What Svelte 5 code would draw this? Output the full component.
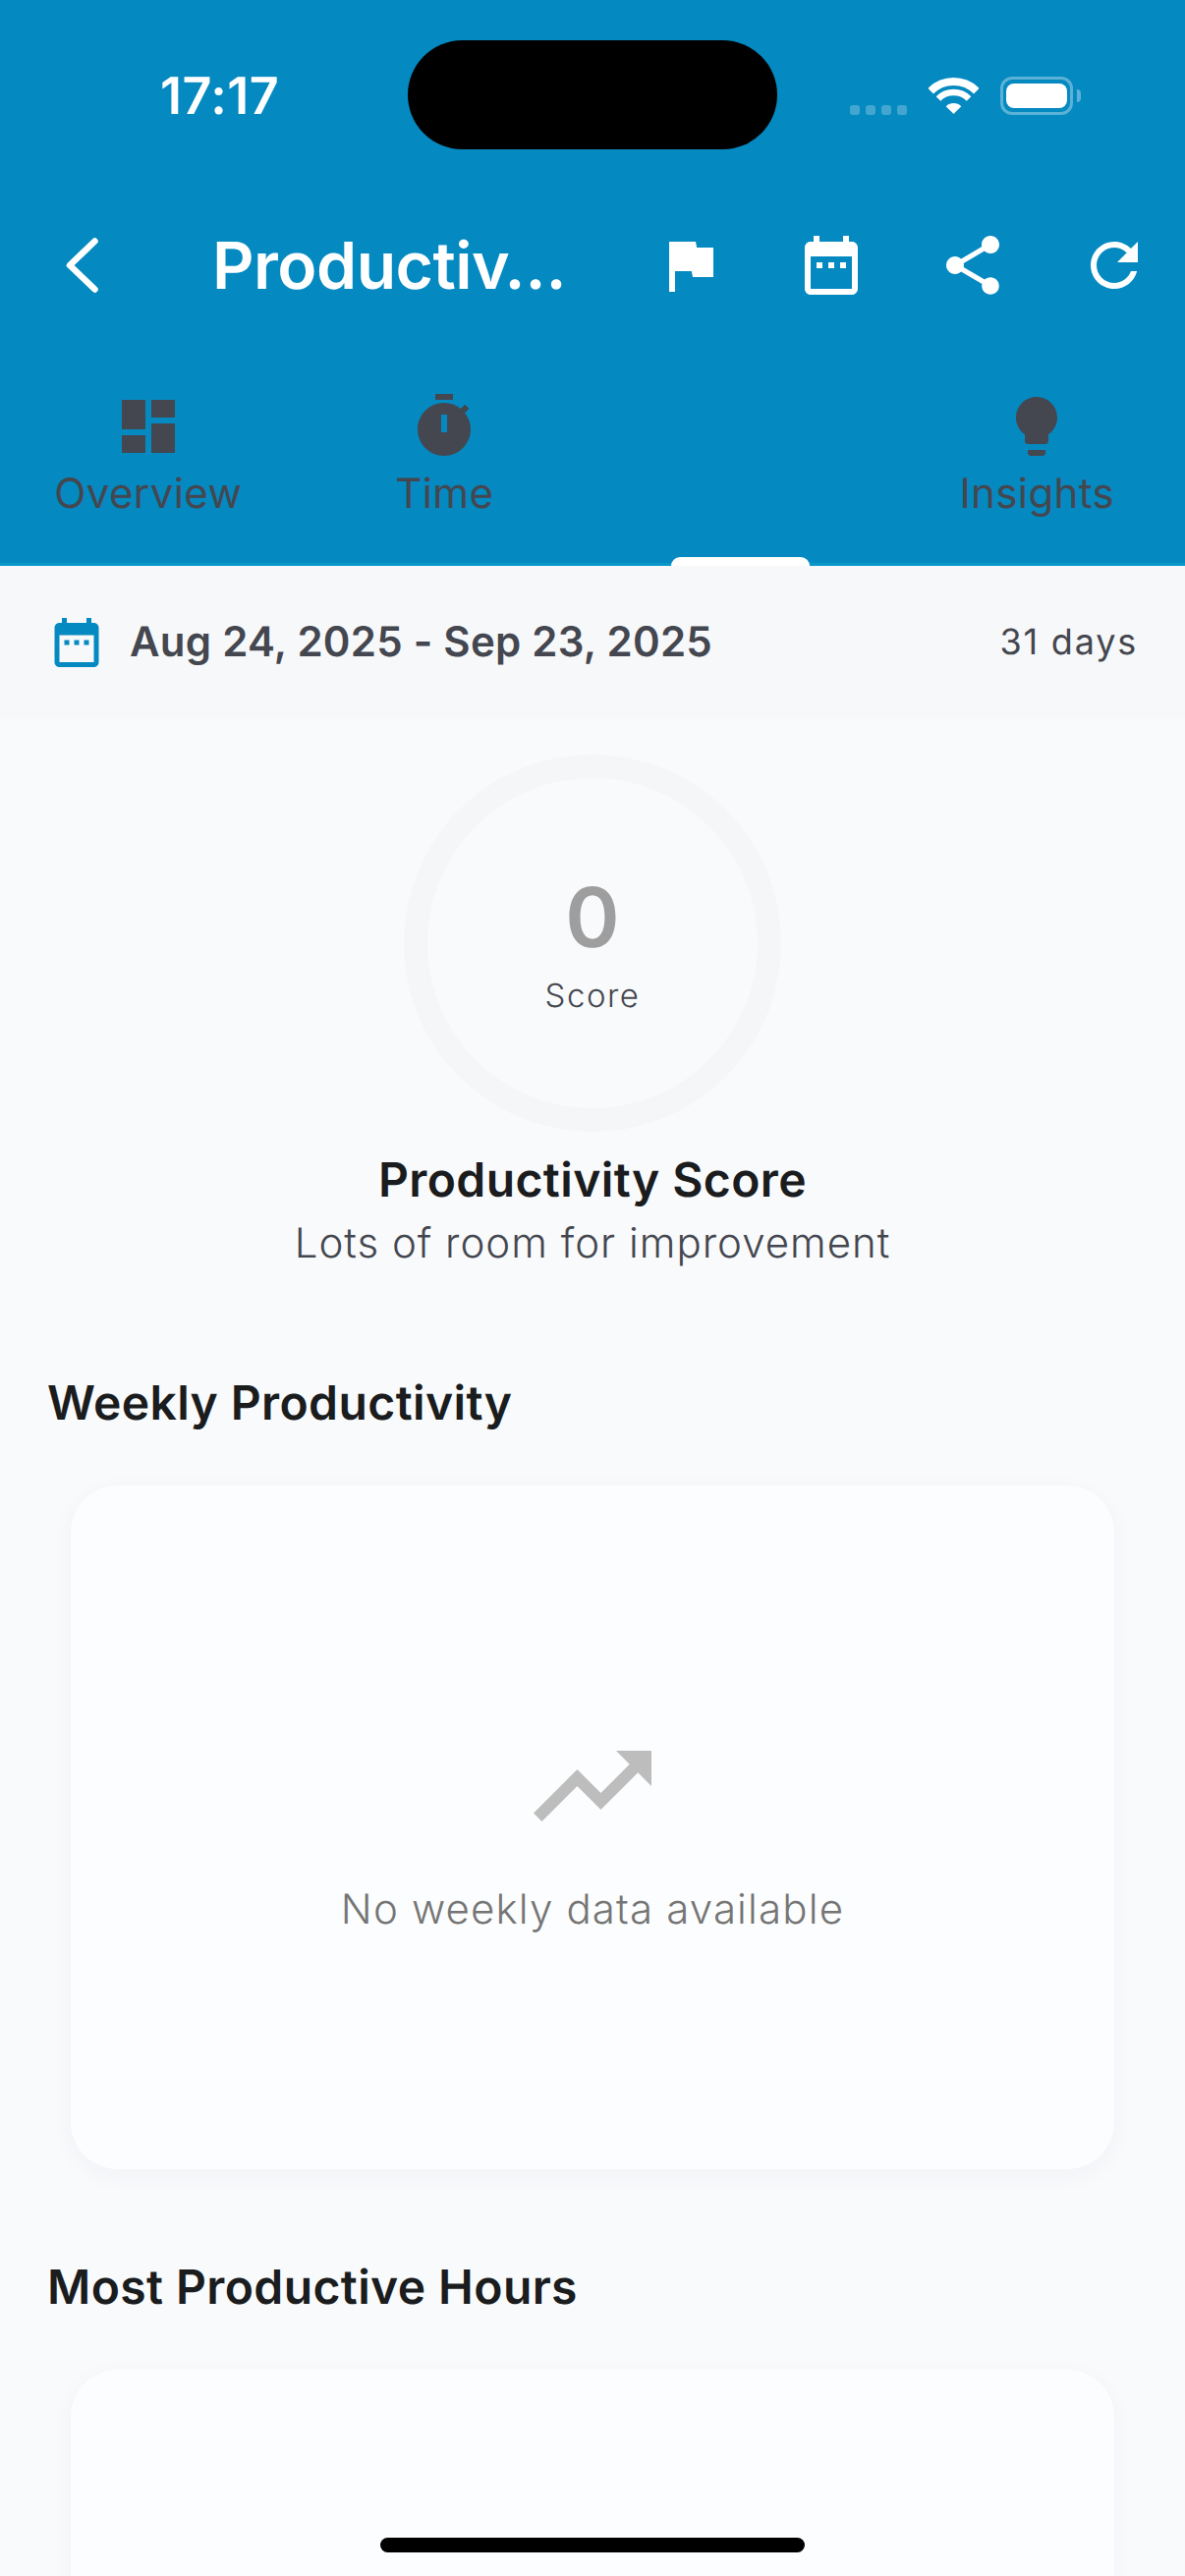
<script>
  const actions = [
    "M14.4 6L14 4H5v17h2v-7h5.6l.4 2h7V6z",
    "M9 11H7v2h2v-2zm4 0h-2v2h2v-2zm4 0h-2v2h2v-2zm2-7h-1V2h-2v2H8V2H6v2H5c-1.11 0-1.99.9-1.99 2L3 20c0 1.1.89 2 2 2h14c1.1 0 2-.9 2-2V6c0-1.1-.9-2-2-2zm0 16H5V9h14v11z",
    "M18 16.08c-.76 0-1.44.3-1.96.77L8.91 12.7c.05-.23.09-.46.09-.7s-.04-.47-.09-.7l7.05-4.11c.54.5 1.25.81 2.04.81 1.66 0 3-1.34 3-3s-1.34-3-3-3-3 1.34-3 3c0 .24.04.47.09.7L8.04 9.81C7.5 9.31 6.79 9 6 9c-1.66 0-3 1.34-3 3s1.34 3 3 3c.79 0 1.5-.31 2.04-.81l7.12 4.16c-.05.21-.08.43-.08.65 0 1.61 1.31 2.92 2.92 2.92 1.61 0 2.92-1.31 2.92-2.92s-1.31-2.92-2.92-2.92z",
    "M17.65 6.35C16.2 4.9 14.21 4 12 4c-4.42 0-7.99 3.58-7.99 8s3.57 8 7.99 8c3.73 0 6.84-2.55 7.73-6h-2.08c-.82 2.33-3.04 4-5.65 4-3.31 0-6-2.69-6-6s2.69-6 6-6c1.66 0 3.14.69 4.22 1.78L13 11h7V4l-2.35 2.35z"
  ];

  const tabs = [
    { label: "Overview", icon: "M3 13h8V3H3v10zm0 8h8v-6H3v6zm10 0h8V11h-8v10zm0-18v6h8V3h-8z" },
    { label: "Time", icon: "M15 1H9v2h6zM19.03 7.39l1.42-1.42c-.43-.51-.9-.99-1.41-1.41l-1.42 1.42C16.07 4.74 14.12 4 12 4c-4.97 0-9 4.03-9 9s4.02 9 9 9 9-4.03 9-9c0-2.12-.74-4.07-1.97-5.61zM13 14h-2V8h2z" },
    { label: "", icon: "", active: true },
    { label: "Insights", icon: "M9 21c0 .55.45 1 1 1h4c.55 0 1-.45 1-1v-1H9v1zm3-19C8.14 2 5 5.14 5 9c0 2.38 1.19 4.47 3 5.74V17c0 .55.45 1 1 1h6c.55 0 1-.45 1-1v-2.26c1.81-1.27 3-3.36 3-5.74 0-3.86-3.14-7-7-7z" }
  ];

  const dateRange = actions[1];
  const trending = "M16 6l2.29 2.29-4.88 4.88-4-4L2 16.59 3.41 18l6-6 4 4 6.3-6.29L22 12V6z";
</script>

<div class="screen">
  <header class="top">
    <div class="status">
      <span class="time">17:17</span>
      <div class="island"></div>
      <div class="indicators">
        <div class="signal"><i></i><i></i><i></i><i></i></div>
        <svg class="wifi" width="51" height="37" viewBox="0 0 51 37">
          <path d="M2.17 13.67A33 33 0 0 1 48.83 13.67" fill="none" stroke="#fff" stroke-width="8" />
          <path d="M9.94 21.44A22 22 0 0 1 41.06 21.44" fill="none" stroke="#fff" stroke-width="6.5" />
          <path d="M25.5 37L17.7 29.2A11 11 0 0 1 33.3 29.2Z" fill="#fff" />
        </svg>
        <div class="battery"><div class="charge"></div></div>
        <div class="cap"></div>
      </div>
    </div>

    <div class="bar">
      <div class="leading">
        <svg width="33" height="56" viewBox="0 0 33 56">
          <path d="M29.5 3.5L4 28L29.5 52.5" fill="none" stroke="#fff" stroke-width="6.5" stroke-linecap="round" stroke-linejoin="round" />
        </svg>
      </div>
      <div class="title">Productiv…</div>
      <div class="actions">
        {#each actions as d}
          <div class="action">
            <svg width="72" height="72" viewBox="0 0 24 24"><path {d} fill="#fff" /></svg>
          </div>
        {/each}
      </div>
    </div>

    <nav class="tabs">
      {#each tabs as tab}
        <div class="tab">
          {#if tab.icon}
            <svg width="72" height="72" viewBox="0 0 24 24"><path d={tab.icon} fill-rule="evenodd" fill="#44474f" /></svg>
            <span>{tab.label}</span>
          {/if}
          {#if tab.active}
            <div class="indicator"></div>
          {/if}
        </div>
      {/each}
    </nav>
  </header>

  <div class="range">
    <svg width="60" height="60" viewBox="0 0 24 24"><path d={dateRange} fill="#0589c1" /></svg>
    <span class="dates">Aug 24, 2025 - Sep 23, 2025</span>
    <span class="days">31 days</span>
  </div>

  <section class="score">
    <div class="ring">
      <span class="value">0</span>
      <span class="caption">Score</span>
    </div>
    <h2>Productivity Score</h2>
    <p>Lots of room for improvement</p>
  </section>

  <h3>Weekly Productivity</h3>
  <div class="card">
    <svg width="144" height="144" viewBox="0 0 24 24"><path d={trending} fill="#bdbdbd" /></svg>
    <span class="empty">No weekly data available</span>
  </div>

  <h3 class="second">Most Productive Hours</h3>
  <div class="card"></div>

  <div class="home"></div>
</div>

<style>
  :global(body) {
    margin: 0;
    background: #f9fafc;
  }

  .screen {
    position: relative;
    width: 1206px;
    height: 2622px;
    overflow: hidden;
    background: #f9fafc;
    font-family: Inter, "Noto Sans", sans-serif;
    text-rendering: geometricPrecision;
  }

  .top {
    background: #0589c1;
    border-bottom: 3px solid #0a98c9;
  }

  .status {
    position: relative;
    height: 186px;
    display: flex;
    align-items: flex-start;
    color: #fff;
  }

  .time {
    margin: 66px 0 0 163px;
    font-size: 52px;
    line-height: 64px;
    font-weight: 600;
    letter-spacing: 0.5px;
  }

  .island {
    position: absolute;
    left: 415px;
    top: 41px;
    width: 376px;
    height: 111px;
    border-radius: 56px;
    background: #000;
  }

  .indicators {
    margin: 78px 0 0 auto;
    padding-right: 106px;
    display: flex;
    align-items: center;
  }

  .signal {
    display: flex;
    gap: 6px;
    margin: 28px 22px 0 0;
  }

  .signal i {
    width: 10px;
    height: 10px;
    border-radius: 3px;
    background: rgba(255, 255, 255, 0.25);
  }

  .wifi {
    margin-right: 22px;
  }

  .battery {
    box-sizing: border-box;
    width: 74px;
    height: 39px;
    padding: 4px 3px;
    border: 3px solid rgba(255, 255, 255, 0.35);
    border-radius: 12px;
  }

  .charge {
    height: 100%;
    border-radius: 8px;
    background: #fff;
  }

  .cap {
    width: 4px;
    height: 13px;
    margin-left: 4px;
    border-radius: 0 4px 4px 0;
    background: rgba(255, 255, 255, 0.35);
  }

  .bar {
    height: 168px;
    display: flex;
    align-items: center;
  }

  .leading {
    width: 162px;
    box-sizing: border-box;
    padding-left: 67px;
    display: flex;
    align-items: center;
  }

  .title {
    flex: 1;
    text-align: center;
    color: #fff;
    font-size: 66px;
    font-weight: 600;
    letter-spacing: -0.5px;
    white-space: nowrap;
  }

  .actions {
    display: flex;
  }

  .action {
    width: 144px;
    display: flex;
    justify-content: center;
  }

  .tabs {
    height: 219px;
    display: grid;
    grid-template-columns: repeat(4, 1fr);
  }

  .tab {
    position: relative;
    padding-top: 44px;
    display: flex;
    flex-direction: column;
    align-items: center;
    color: #44474f;
    font-size: 42px;
    line-height: 66px;
    letter-spacing: 0.4px;
  }

  .indicator {
    position: absolute;
    bottom: -3px;
    left: 80px;
    width: 141px;
    height: 9px;
    border-radius: 9px 9px 0 0;
    background: #fff;
  }

  .range {
    height: 156px;
    box-sizing: border-box;
    padding: 0 48px;
    display: flex;
    align-items: center;
    gap: 24px;
    background: #f7f8fa;
    color: #44474f;
  }

  .dates {
    flex: 1;
    margin-top: -2px;
    font-size: 42px;
    font-weight: 600;
    letter-spacing: 0.26px;
  }

  .days {
    margin-top: -2px;
    font-size: 36px;
    letter-spacing: 1.8px;
  }

  .score {
    padding-top: 36px;
    display: flex;
    flex-direction: column;
    align-items: center;
  }

  .ring {
    box-sizing: border-box;
    width: 384px;
    height: 384px;
    padding-top: 6px;
    border: 24px solid #f5f6f8;
    border-radius: 50%;
    display: flex;
    flex-direction: column;
    align-items: center;
    justify-content: center;
  }

  .value {
    font-size: 84px;
    line-height: 100px;
    font-weight: 600;
    color: #9e9e9e;
  }

  .caption {
    font-size: 33px;
    line-height: 56px;
    letter-spacing: 1.5px;
    font-weight: 300;
    color: #44474f;
  }

  h2 {
    margin: 17px 0 0;
    font-size: 48px;
    line-height: 64px;
    font-weight: 600;
    letter-spacing: 0.4px;
    color: #1a1c1e;
  }

  p {
    margin: 3px 0 0;
    font-size: 42px;
    line-height: 60px;
    font-weight: 300;
    letter-spacing: 1px;
    color: #44474f;
  }

  h3 {
    margin: 100px 0 0 48px;
    font-size: 48px;
    line-height: 64px;
    font-weight: 600;
    letter-spacing: 0.4px;
    color: #1a1c1e;
  }

  h3.second {
    margin-top: 88px;
  }

  .card {
    box-sizing: border-box;
    width: 1062px;
    height: 696px;
    margin: 52px 0 0 72px;
    display: flex;
    flex-direction: column;
    align-items: center;
    justify-content: center;
    gap: 24px;
    border-radius: 48px;
    background: #fcfdfe;
    box-shadow: 0 6px 24px rgba(0, 40, 80, 0.04);
  }

  .empty {
    font-size: 42px;
    line-height: 60px;
    font-weight: 300;
    letter-spacing: 1.15px;
    color: #757575;
  }

  .home {
    position: absolute;
    left: 387px;
    top: 2583px;
    width: 432px;
    height: 15px;
    border-radius: 8px;
    background: #000;
  }
</style>
